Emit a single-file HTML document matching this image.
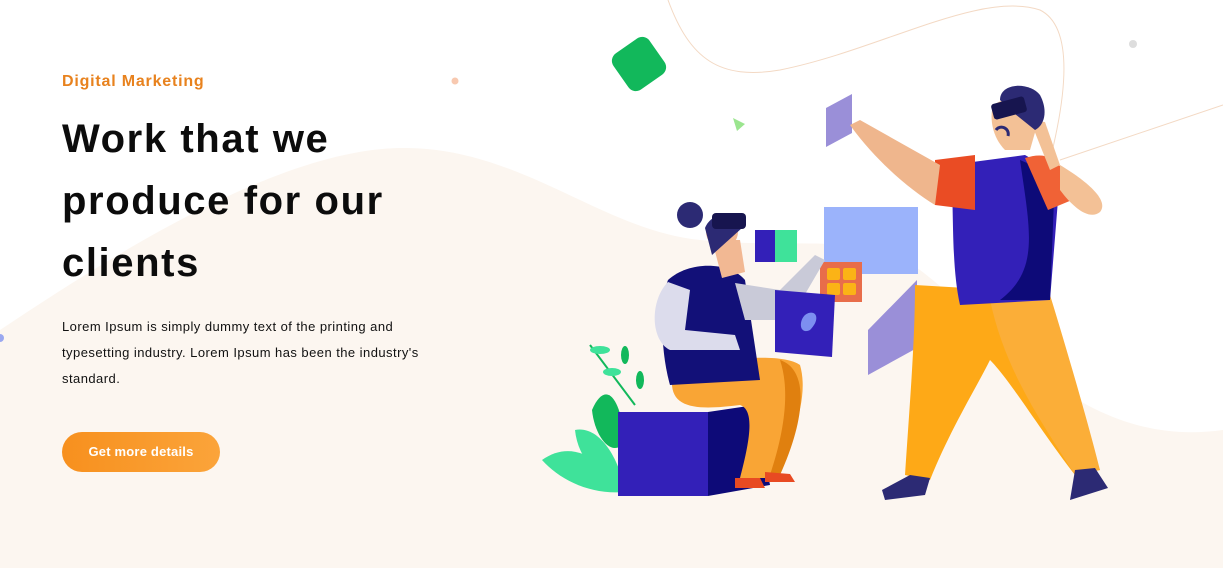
<!DOCTYPE html>
<html><head><meta charset="utf-8"><style>
html,body{margin:0;padding:0;}
body{width:1223px;height:568px;overflow:hidden;position:relative;background:#fff;font-family:"Liberation Sans",sans-serif;}
svg.bg{position:absolute;left:0;top:0;}
.t{position:absolute;left:62px;}
.sub{top:73px;color:#e8821e;font-weight:bold;font-size:16px;letter-spacing:0.8px;}
h1{position:absolute;left:62px;top:108px;margin:0;font-size:40px;line-height:62px;font-weight:bold;color:#0c0c0c;letter-spacing:1.6px;}
p{position:absolute;left:62px;top:314px;margin:0;font-size:13px;line-height:26px;color:#111;width:385px;letter-spacing:0.45px;}
.btn{position:absolute;left:62px;top:432px;width:158px;height:40px;border-radius:20px;background:linear-gradient(90deg,#f7901e,#fba43a);color:#fff;font-size:13px;font-weight:bold;line-height:40px;text-align:center;letter-spacing:0.2px;}
</style></head><body>
<svg class="bg" width="1223" height="568" viewBox="0 0 1223 568">
<path d="M0 330 C120 250 280 150 400 148 C520 146 600 230 700 240 C800 250 860 230 920 270 C1000 330 1080 450 1223 430 L1223 568 L0 568 Z" fill="#fcf6f0"/>
<path d="M668 0 C690 60 720 80 780 70 C880 50 980 -10 1040 10 C1080 30 1060 120 1050 160 M1060 160 C1120 140 1180 120 1223 105" fill="none" stroke="#f3d9c4" stroke-width="1"/>
<circle cx="1133" cy="44" r="4" fill="#ddd"/>
<circle cx="455" cy="81" r="3.5" fill="#f8c9b0"/>
<circle cx="0" cy="338" r="4" fill="#9aa8f0"/>
<rect x="617" y="42" width="44" height="44" rx="9" fill="#12b85b" transform="rotate(-35 639 64)"/>
<path d="M733 118 L745 124 L737 131 Z" fill="#9be58f"/>
<path d="M826 108 L852 94 L852 133 L826 147 Z" fill="#9a8fd8"/>
<rect x="824" y="207" width="94" height="67" fill="#9bb3fb"/>
<path d="M868 330 L917 280 L917 348 L868 375 Z" fill="#9a8fd8"/>
<rect x="755" y="230" width="20" height="32" fill="#3320b8"/>
<rect x="775" y="230" width="22" height="32" fill="#3fe29a"/>
<rect x="820" y="262" width="42" height="40" fill="#e86d4a"/>
<rect x="827" y="268" width="13" height="12" rx="2" fill="#fbb316"/><rect x="843" y="268" width="13" height="12" rx="2" fill="#fbb316"/>
<rect x="827" y="283" width="13" height="12" rx="2" fill="#fbb316"/><rect x="843" y="283" width="13" height="12" rx="2" fill="#fbb316"/>
<path d="M542 460 C570 440 600 455 625 492 C590 495 560 480 542 460Z" fill="#3fe29a"/>
<path d="M592 410 C605 380 620 395 625 440 C615 460 595 440 592 410Z" fill="#12b85b"/>
<path d="M575 430 C600 425 620 460 625 492 C600 480 578 460 575 430Z" fill="#3fe29a"/>
<path d="M590 345 L635 405" stroke="#12b85b" stroke-width="2" fill="none"/>
<ellipse cx="600" cy="350" rx="10" ry="4" fill="#3fe29a"/><ellipse cx="625" cy="355" rx="4" ry="9" fill="#12b85b"/>
<ellipse cx="612" cy="372" rx="9" ry="4" fill="#3fe29a"/><ellipse cx="640" cy="380" rx="4" ry="9" fill="#12b85b"/>
<rect x="618" y="412" width="90" height="84" fill="#3320b8"/>
<path d="M708 412 L755 405 L770 485 L708 496 Z" fill="#0d0a78"/>
<path d="M672 380 C690 360 780 350 800 365 C810 400 790 440 778 478 L740 478 C750 440 755 410 740 405 C700 410 670 410 672 380Z" fill="#f9a535"/>
<path d="M780 360 C810 370 805 420 780 475 L770 475 C785 430 790 390 780 360Z" fill="#e0800f"/>
<path d="M735 478 L760 478 L765 488 L735 488Z" fill="#e84a22"/><path d="M765 472 L790 474 L795 482 L765 482Z" fill="#e84a22"/>
<path d="M668 280 C690 260 730 262 745 280 L760 380 L670 385 C660 350 660 300 668 280Z" fill="#121078"/>
<path d="M668 282 C650 300 650 340 670 350 L740 350 L735 335 L685 330 L690 290Z" fill="#dcdcec"/>
<path d="M735 283 L780 290 L815 255 L825 260 L790 320 L745 320Z" fill="#c9cad8"/>
<path d="M712 240 L740 240 L745 272 L722 278Z" fill="#f2b893"/>
<circle cx="722" cy="232" r="16" fill="#f2b893"/>
<circle cx="690" cy="215" r="13" fill="#2c2a74"/><path d="M705 228 C712 210 740 210 742 228 L712 255Z" fill="#2c2a74"/>
<rect x="712" y="213" width="34" height="16" rx="4" fill="#17154f"/>
<path d="M775 290 L835 295 L832 357 L775 352Z" fill="#3320b8"/>
<path d="M805 315 C815 308 822 318 810 330 C800 335 798 322 805 315Z" fill="#7d8ff0"/>
<path d="M915 285 L1000 290 C1040 330 1075 420 1100 470 L1075 475 C1040 430 1010 380 990 360 C975 390 950 430 930 480 L905 475 C910 400 915 340 915 285Z" fill="#fea917"/>
<path d="M990 300 L1050 295 C1070 360 1090 430 1100 470 L1075 475 C1040 420 1005 370 990 300Z" fill="#fbae38"/>
<path d="M910 475 L930 478 L925 495 L885 500 L882 490Z" fill="#2c2a74"/>
<path d="M1075 470 L1095 468 L1108 488 L1070 500Z" fill="#2c2a74"/>
<path d="M950 165 L1025 155 L1060 175 L1050 300 L960 305 C950 260 955 200 950 165Z" fill="#3320b8"/>
<path d="M1020 160 L1055 175 L1050 300 L1000 300 C1040 270 1030 230 1020 160Z" fill="#0d0a78"/>
<path d="M935 160 L975 155 L975 210 L935 205Z" fill="#ea4c24"/>
<path d="M1025 158 C1050 150 1065 160 1072 200 L1048 210Z" fill="#f06236"/>
<path d="M850 125 L860 120 L940 165 L935 205 C910 190 875 160 850 125Z" fill="#efb68d"/>
<path d="M1060 165 C1085 180 1110 200 1100 212 C1090 220 1075 210 1060 190Z" fill="#f3c196"/>
<path d="M1030 120 L1045 122 L1060 165 L1050 170Z" fill="#f3c196"/>
<path d="M992 110 C995 95 1030 95 1040 115 L1030 150 L1005 150 C995 140 990 125 992 110Z" fill="#f3c196"/>
<path d="M1000 100 C1000 82 1030 82 1040 95 C1048 110 1045 125 1035 130 L1010 110Z" fill="#2c2a74"/>
<rect x="992" y="100" width="34" height="16" rx="3" fill="#17154f" transform="rotate(-15 1009 108)"/>
<path d="M996 130 C1000 124 1010 128 1008 136" stroke="#2c2a74" stroke-width="3" fill="none"/>
</svg>
<div class="t sub">Digital Marketing</div>
<h1>Work that we<br>produce for our<br>clients</h1>
<p>Lorem Ipsum is simply dummy text of the printing and typesetting industry. Lorem Ipsum has been the industry's standard.</p>
<div class="btn">Get more details</div>
</body></html>
